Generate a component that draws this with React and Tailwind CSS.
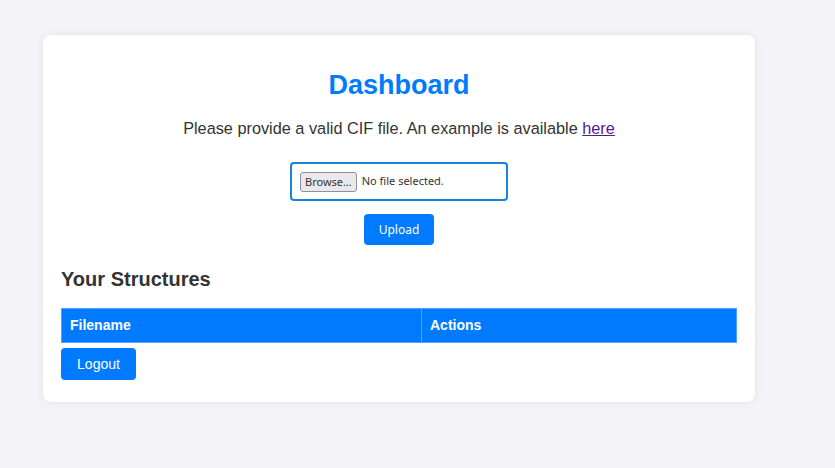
export default function App() {
  return (
    <div className="min-h-[468px] bg-[#f4f4f8] pt-[35px] pl-[43px] font-['Liberation_Sans',Arial,sans-serif]">
      <div className="w-[712px] rounded-lg bg-white px-[18px] pt-[34px] pb-[22px] shadow-[0_0_8px_rgba(0,0,0,0.08)]">
        <h1 className="text-center text-[27px] font-bold leading-[32px] text-[#007bff]">Dashboard</h1>
        <p className="mt-[15px] text-center text-[16.3px] leading-[24px] text-[#333]">
          Please provide a valid CIF file. An example is available{' '}
          <a href="#" className="text-[#551a8b] underline">here</a>
        </p>
        <div className="mt-[22px] flex justify-center">
          <div className="flex h-[39px] w-[218px] items-center rounded-[4px] border-2 border-[#1a82d8] pl-[8px] font-['Noto_Sans',sans-serif] text-[11px] text-[#333]">
            <span className="flex h-[20px] items-center rounded-[3px] border border-[#8f8f9d] bg-[#e9e9ed] px-[4px] leading-none">Browse…</span>
            <span className="ml-[5px]">No file selected.</span>
          </div>
        </div>
        <div className="mt-[13px] flex justify-center">
          <button className="h-[31px] w-[70px] rounded-[4px] bg-[#007bff] font-['Noto_Sans',sans-serif] text-[12px] text-white">Upload</button>
        </div>
        <h2 className="mt-[22px] text-[20px] font-bold leading-[24px] text-[#333]">Your Structures</h2>
        <table className="mt-[17px] w-full border-collapse">
          <thead>
            <tr className="h-[34px] bg-[#007bff] text-left text-[14px] font-bold text-white">
              <th className="w-[360px] border border-[#4da3ff] px-[8px]">Filename</th>
              <th className="border border-[#4da3ff] px-[8px]">Actions</th>
            </tr>
          </thead>
        </table>
        <button className="mt-[5px] h-[32px] w-[75px] rounded-[4px] bg-[#007bff] text-[14px] text-white">Logout</button>
      </div>
    </div>
  );
}
